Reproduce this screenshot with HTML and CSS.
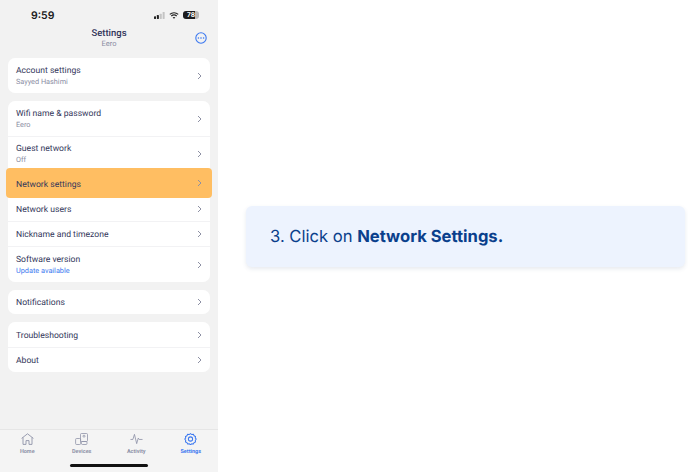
FILE: index.html
```html
<!DOCTYPE html>
<html lang="en">
<head>
  <meta charset="UTF-8">
  <meta name="viewport" content="width=device-width, initial-scale=1.0">
  <title>Settings</title>
  <link rel="stylesheet" href="styles.css">
</head>
<body>
  <div class="phone">
    <div class="status-bar">
      <span class="time">9:59</span>
      <div class="status-icons">
        <svg width="11" height="7" viewBox="0 0 13 8">
          <rect x="0" y="5" width="2.4" height="3" rx=".5" fill="#222"></rect>
          <rect x="3.4" y="3.5" width="2.4" height="4.5" rx=".5" fill="#222"></rect>
          <rect x="6.8" y="2" width="2.4" height="6" rx=".5" fill="#c4c4c4"></rect>
          <rect x="10.2" y="0" width="2.4" height="8" rx=".5" fill="#c4c4c4"></rect>
        </svg>
        <svg width="10" height="7" viewBox="0 0 11 8" fill="none" stroke="#222" stroke-width="1.3">
          <path d="M.7 2.8c2.7-2.6 6.9-2.6 9.6 0"></path>
          <path d="M2.4 4.6c1.8-1.6 4.4-1.6 6.2 0"></path>
          <path d="M5.5 7.8 3.9 6.2c.9-.8 2.3-.8 3.2 0z" fill="#222" stroke="none"></path>
        </svg>
        <div class="battery"><span>78</span></div>
      </div>
    </div>

    <header class="nav-head">
      <div class="nav-title">Settings</div>
      <div class="nav-sub">Eero</div>
      <svg class="more-icon" width="12" height="12" viewBox="0 0 12 12" fill="none">
        <circle cx="6" cy="6" r="5.2" stroke="#3b78f0" stroke-width="1.1"></circle>
        <circle cx="3.4" cy="6" r=".8" fill="#3b78f0"></circle>
        <circle cx="6" cy="6" r=".8" fill="#3b78f0"></circle>
        <circle cx="8.6" cy="6" r=".8" fill="#3b78f0"></circle>
      </svg>
    </header>

    <div class="content">
      <div class="card">
        <div class="row tall">
          <div><div class="label">Account settings</div><div class="sub">Sayyed Hashimi</div></div>
          <svg class="chev" viewBox="0 0 5 8"><path d="M1 1l3 3-3 3"></path></svg>
        </div>
      </div>

      <div class="card">
        <div class="row tall">
          <div><div class="label">Wifi name &amp; password</div><div class="sub">Eero</div></div>
          <svg class="chev" viewBox="0 0 5 8"><path d="M1 1l3 3-3 3"></path></svg>
        </div>
        <div class="row tall">
          <div><div class="label">Guest network</div><div class="sub">Off</div></div>
          <svg class="chev" viewBox="0 0 5 8"><path d="M1 1l3 3-3 3"></path></svg>
        </div>
        <div class="row active">
          <div class="label">Network settings</div>
          <svg class="chev" viewBox="0 0 5 8"><path d="M1 1l3 3-3 3"></path></svg>
        </div>
        <div class="row">
          <div class="label">Network users</div>
          <svg class="chev" viewBox="0 0 5 8"><path d="M1 1l3 3-3 3"></path></svg>
        </div>
        <div class="row">
          <div class="label">Nickname and timezone</div>
          <svg class="chev" viewBox="0 0 5 8"><path d="M1 1l3 3-3 3"></path></svg>
        </div>
        <div class="row tall software">
          <div><div class="label">Software version</div><div class="sub update">Update available</div></div>
          <svg class="chev" viewBox="0 0 5 8"><path d="M1 1l3 3-3 3"></path></svg>
        </div>
      </div>

      <div class="card">
        <div class="row single">
          <div class="label">Notifications</div>
          <svg class="chev" viewBox="0 0 5 8"><path d="M1 1l3 3-3 3"></path></svg>
        </div>
      </div>

      <div class="card">
        <div class="row">
          <div class="label">Troubleshooting</div>
          <svg class="chev" viewBox="0 0 5 8"><path d="M1 1l3 3-3 3"></path></svg>
        </div>
        <div class="row">
          <div class="label">About</div>
          <svg class="chev" viewBox="0 0 5 8"><path d="M1 1l3 3-3 3"></path></svg>
        </div>
      </div>
    </div>

    <nav class="tabs">
      <div class="tab">
        <svg width="13" height="12" viewBox="0 0 13 12" fill="none" stroke="#8f93a8" stroke-width=".9">
          <path d="M.6 5.4 6.5.8l5.9 4.6M2 4.4v7h3V7.6h3v3.8h3v-7"></path>
        </svg>
        <span>Home</span>
      </div>
      <div class="tab">
        <svg width="13" height="12" viewBox="0 0 13 12" fill="none" stroke="#8f93a8" stroke-width=".8">
          <rect x="5.5" y=".5" width="7" height="8" rx="1"></rect>
          <circle cx="9" cy="3.2" r="1"></circle>
          <rect x=".6" y="5.5" width="5" height="6" rx="1"></rect>
          <rect x="6.5" y="8.5" width="5.5" height="3" rx="1"></rect>
        </svg>
        <span>Devices</span>
      </div>
      <div class="tab">
        <svg width="13" height="12" viewBox="0 0 14 12" fill="none" stroke="#8f93a8" stroke-width=".9">
          <path d="M.5 6.5h2.6L4.8 1l2.4 10 1.7-6 1 1.5h3.6"></path>
        </svg>
        <span>Activity</span>
      </div>
      <div class="tab current">
        <svg width="13" height="12" viewBox="0 0 13 13" fill="none" stroke="#3b78f0" stroke-width="1.1">
          <path d="M6.5.7l1.4 1 1.7-.2.8 1.5 1.5.8-.2 1.7 1 1-1 1.4.2 1.7-1.5.8-.8 1.5-1.7-.2-1.4 1-1.4-1-1.7.2-.8-1.5-1.5-.8.2-1.7-1-1.4 1-1-.2-1.7 1.5-.8.8-1.5 1.7.2z"></path>
          <circle cx="6.5" cy="6.5" r="2.3"></circle>
        </svg>
        <span>Settings</span>
      </div>
    </nav>
    <div class="home-bar-wrap"><div class="home-bar"></div></div>
  </div>

  <main class="main">
    <div class="callout"><p>3. Click on <strong>Network Settings.</strong></p></div>
  </main>
</body>
</html>
```

FILE: styles.css
```css
* {
  box-sizing: border-box;
}
body {
  margin: 0;
  width: 688px;
  height: 472px;
  overflow: hidden;
  display: flex;
  background: #fff;
  font-family: "Roboto", "Noto Sans", sans-serif;
  color: #33365a;
  text-rendering: geometricPrecision;
}
.phone {
  width: 218px;
  height: 472px;
  flex-shrink: 0;
  display: flex;
  flex-direction: column;
  background: #f2f2f2;
}
.status-bar {
  height: 26px;
  padding: 4px 19px 0 31px;
  display: flex;
  align-items: center;
  justify-content: space-between;
}
.time {
  font-family: "Inter", sans-serif;
  font-size: 10.5px;
  font-weight: 600;
  color: #1c1c1e;
}
.status-icons {
  display: flex;
  align-items: center;
  gap: 4px;
}
.battery {
  width: 16px;
  height: 8px;
  border-radius: 3px;
  background: linear-gradient(90deg, #1c1c1e 78%, #b9b9b9 78%);
  display: flex;
  align-items: center;
  justify-content: center;
  font-family: "Inter", sans-serif;
  font-size: 6.5px;
  font-weight: 700;
  color: #fff;
}
.nav-head {
  position: relative;
  height: 32px;
  padding-top: 2px;
  text-align: center;
}
.nav-title {
  font-size: 9.5px;
  font-weight: 500;
  line-height: 11px;
}
.nav-sub {
  font-size: 7.5px;
  line-height: 10px;
  color: #8a8da3;
}
.more-icon {
  position: absolute;
  top: 6px;
  right: 11px;
}
.content {
  flex: 1;
  padding: 0 8px;
  display: flex;
  flex-direction: column;
  gap: 8px;
}
.card {
  background: #fff;
  border-radius: 7px;
}
.row {
  height: 25px;
  padding: 0 8px;
  display: flex;
  align-items: center;
  justify-content: space-between;
  border-top: 1px solid #f2f2f4;
}
.row:first-child {
  border-top: 0;
}
.row.tall {
  height: 35px;
}
.row.software {
  height: 36px;
}
.row.single {
  height: 24px;
}
.row.active {
  height: 30px;
  margin: -3px -2px -2px;
  padding: 0 10px;
  position: relative;
  background: #ffbe62;
  border: 0;
  border-radius: 4px;
}
.label {
  font-size: 8.6px;
  line-height: 12px;
}
.row > .label {
  padding-top: 2px;
  height: 14px;
}
.row.active > .label {
  padding-top: 4px;
  height: 16px;
}
.sub {
  font-size: 7.3px;
  line-height: 10px;
  color: #8a8da3;
}
.sub.update {
  color: #3b78f0;
}
.chev {
  width: 5px;
  height: 8px;
  fill: none;
  stroke: #8d90a4;
  stroke-width: 1;
}
.tabs {
  height: 32px;
  padding: 3px 0 0;
  display: flex;
  justify-content: space-around;
  border-top: 1px solid #e6e6e6;
  background: #f4f4f4;
}
.tab {
  width: 54px;
  display: flex;
  flex-direction: column;
  align-items: center;
  gap: 4px;
  font-size: 5.5px;
  font-weight: 700;
  color: #8f93a8;
}
.tab.current {
  color: #3b78f0;
}
.home-bar-wrap {
  height: 11px;
  padding-top: 3px;
  display: flex;
  justify-content: center;
  background: #f4f4f4;
}
.home-bar {
  width: 78px;
  height: 3px;
  border-radius: 2px;
  background: #111;
}
.main {
  flex: 1;
  padding: 206px 3px 0 28px;
}
.callout {
  height: 61px;
  padding: 0 24px;
  display: flex;
  align-items: center;
  border-radius: 6px;
  background: #edf3fe;
  box-shadow: 0 2px 4px rgba(60, 80, 120, 0.12);
  font-family: "Inter", sans-serif;
  font-size: 16.6px;
  color: #0a3f8c;
}
.callout p {
  margin: 0;
}
.callout strong {
  font-weight: 700;
}
```
